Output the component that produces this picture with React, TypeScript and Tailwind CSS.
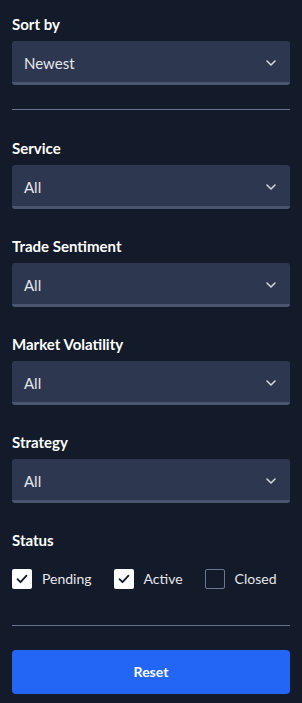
import { useState } from "react";

const FONT = "[font-family:Lato,'Noto_Sans',sans-serif]";

function Chevron() {
  return (
    <svg width="10" height="6" viewBox="0 0 10 6" fill="none" className="text-gray-300">
      <path d="M1 1l4 4 4-4" stroke="currentColor" strokeWidth="1.6" strokeLinecap="round" strokeLinejoin="round" />
    </svg>
  );
}

function SelectField({ label, value }: { label: string; value: string }) {
  return (
    <div className="flex flex-col gap-[7px]">
      <p className="text-[15px] font-bold leading-5 text-white">{label}</p>
      <button
        type="button"
        className="flex h-11 items-center justify-between rounded-[3px] border-b-[3px] border-[#4a5570] bg-[#2d3750] pl-3 pr-[14px] pt-[3px] text-left text-[15px] text-gray-200"
      >
        <span>{value}</span>
        <Chevron />
      </button>
    </div>
  );
}

function Check({ label, initial }: { label: string; initial: boolean }) {
  const [checked, setChecked] = useState(initial);
  return (
    <label className="flex cursor-pointer items-center gap-2.5 text-sm text-gray-200">
      <button
        type="button"
        onClick={() => setChecked(!checked)}
        className={`flex h-5 w-5 items-center justify-center rounded-[2px] ${
          checked ? "bg-white" : "border border-[#6b7694] bg-transparent"
        }`}
      >
        {checked && (
          <svg width="12" height="10" viewBox="0 0 12 10" fill="none">
            <path d="M1.5 5.2l3 3 6-6.5" stroke="#111827" strokeWidth="1.8" strokeLinecap="round" strokeLinejoin="round" />
          </svg>
        )}
      </button>
      <span>{label}</span>
    </label>
  );
}

export default function App() {
  return (
    <div className={`min-h-[703px] w-[302px] bg-[#131a29] px-3 pt-[14px] ${FONT}`}>
      <SelectField label="Sort by" value="Newest" />
      <div className="mt-6 h-px bg-[#68738f]" />

      <div className="mt-7 flex flex-col gap-[27px]">
        <SelectField label="Service" value="All" />
        <SelectField label="Trade Sentiment" value="All" />
        <SelectField label="Market Volatility" value="All" />
        <SelectField label="Strategy" value="All" />
        <div>
          <p className="text-[15px] font-bold leading-5 text-white">Status</p>
          <div className="mt-[19px] flex items-center gap-[22px]">
            <Check label="Pending" initial />
            <Check label="Active" initial />
            <Check label="Closed" initial={false} />
          </div>
        </div>
      </div>

      <div className="mt-9 h-px bg-[#68738f]" />
      <button
        type="button"
        className="mt-6 flex h-11 w-full items-center justify-center rounded-[4px] bg-[#2366f5] text-sm font-bold text-white"
      >
        Reset
      </button>
    </div>
  );
}
